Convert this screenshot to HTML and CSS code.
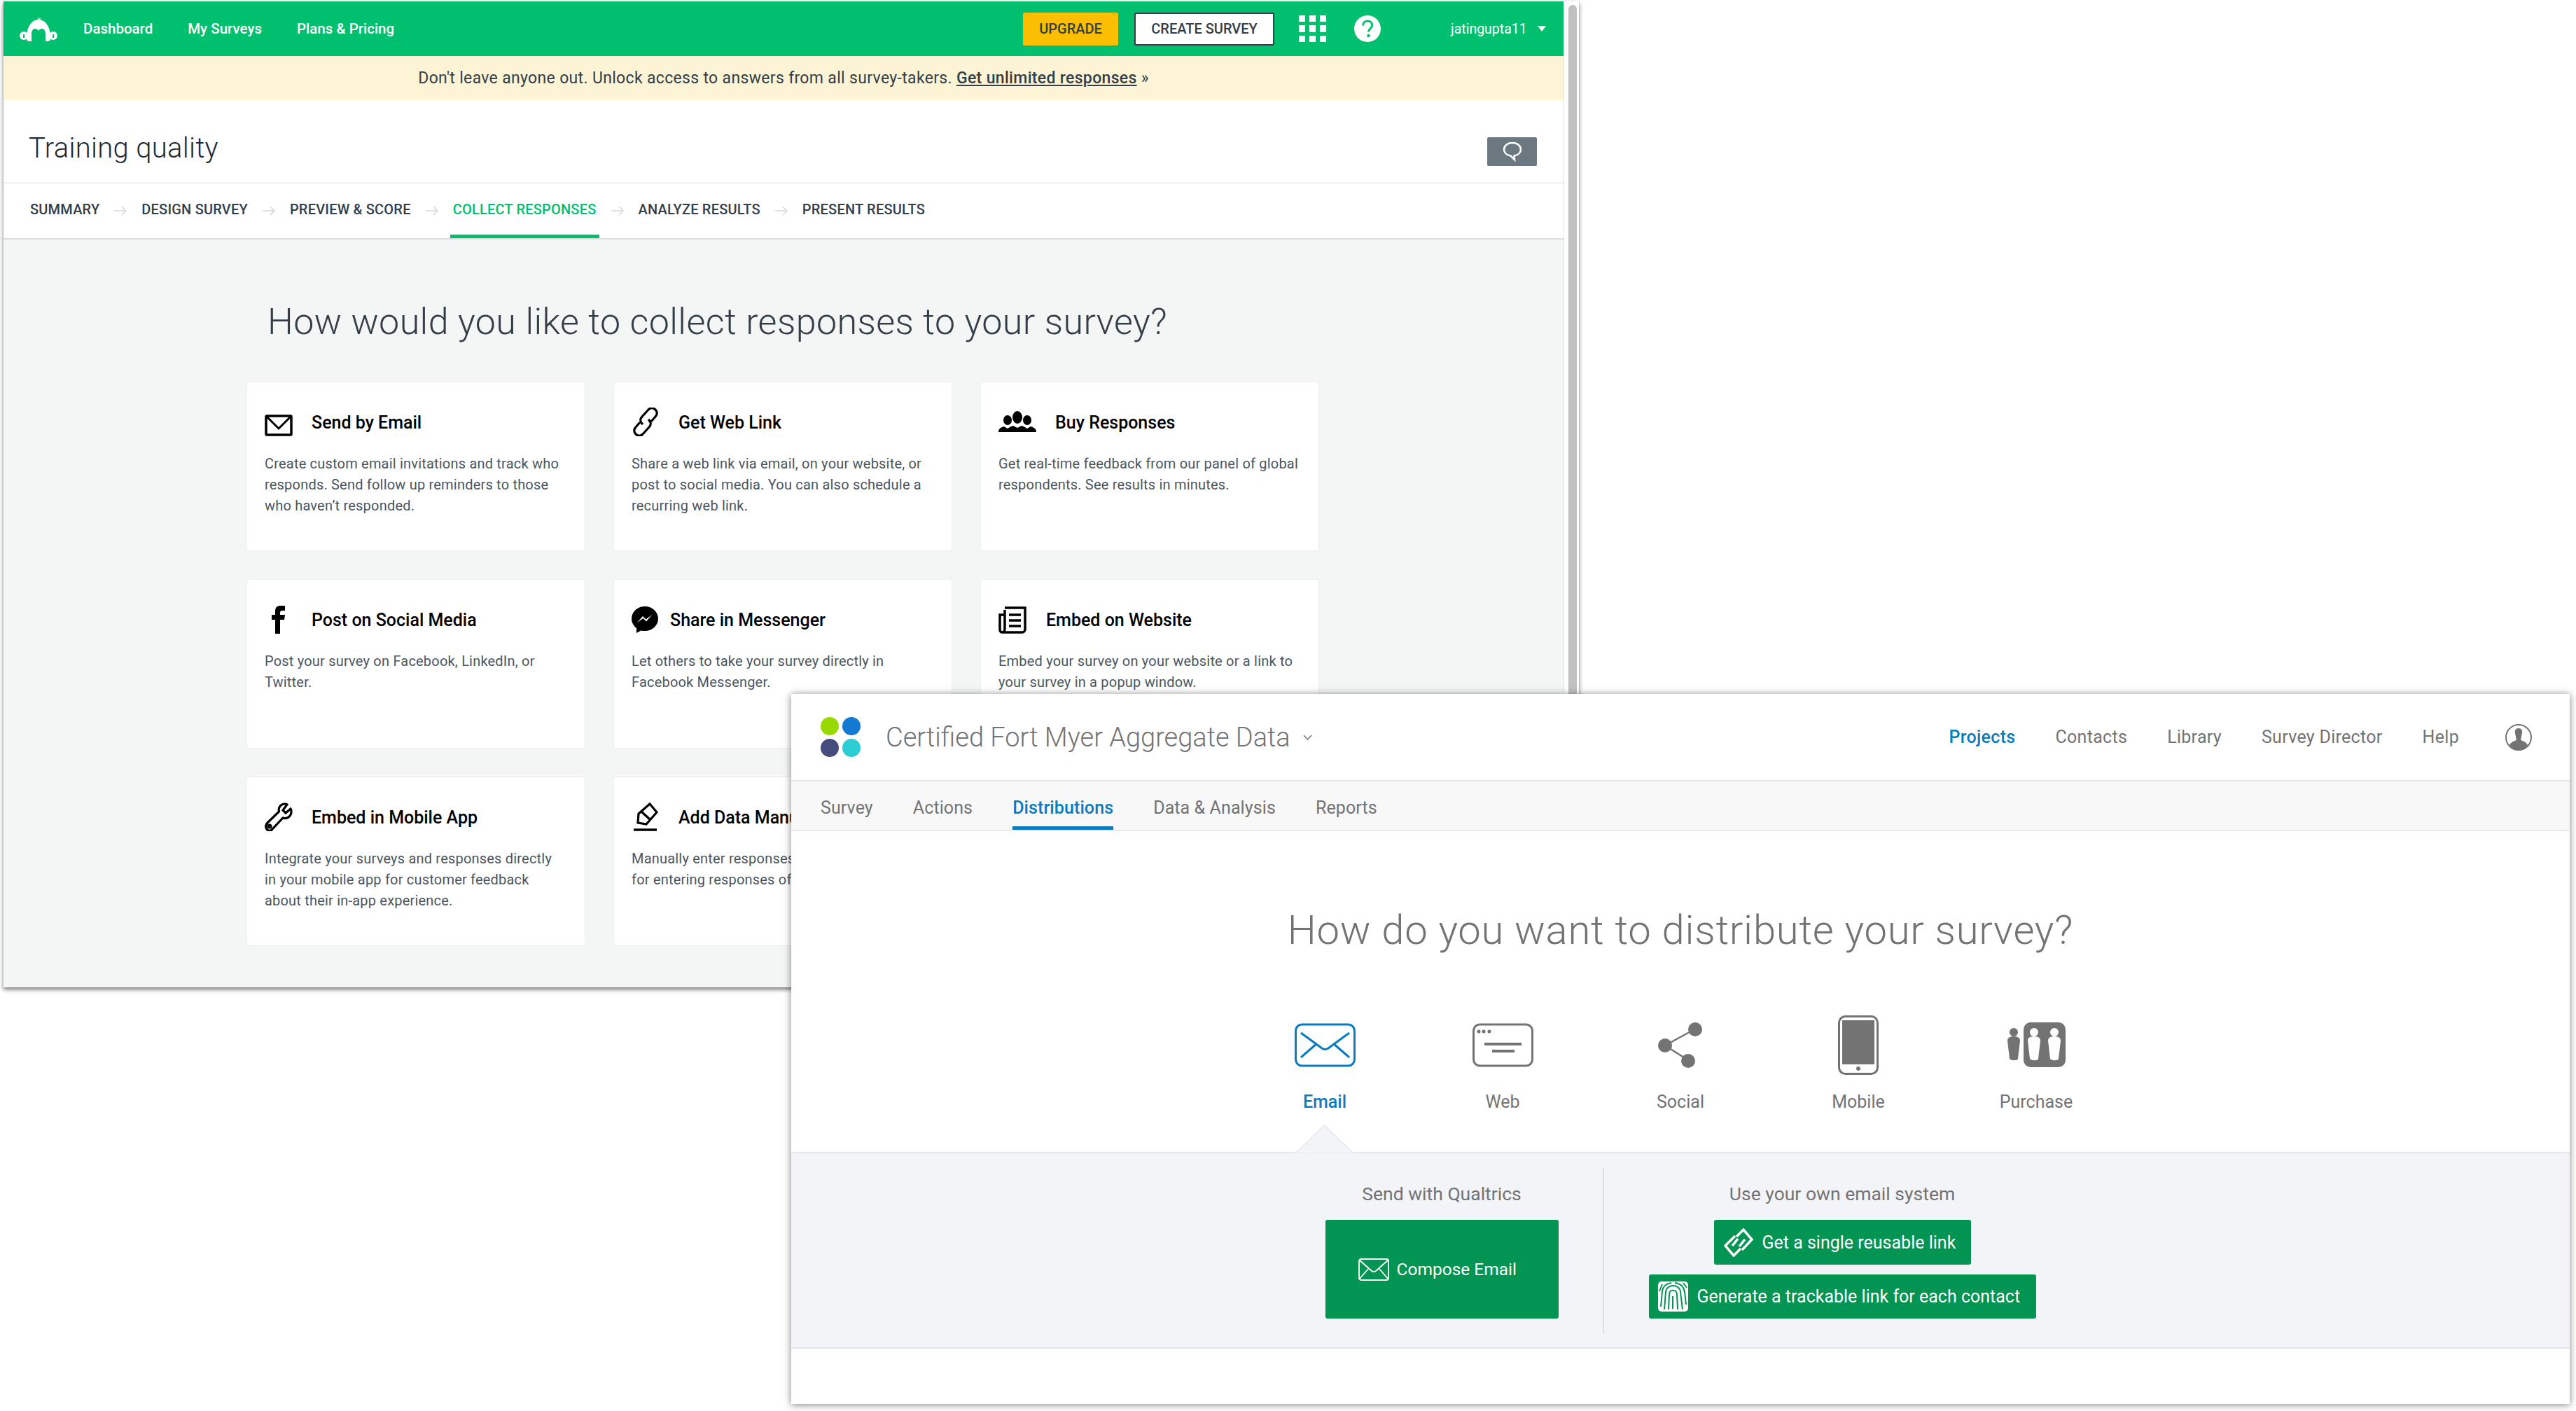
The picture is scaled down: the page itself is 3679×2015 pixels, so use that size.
FILE: index.html
```html
<!DOCTYPE html>
<html lang="en">
<head>
    <meta charset="UTF-8">
    <title>Survey distribution comparison</title>
    <link rel="stylesheet" href="styles.css">
</head>
<body>

    <!-- SurveyMonkey window -->
    <div class="window window-sm">
        <div class="sm-main">
            <div class="sm-nav">
                <svg class="sm-logo" width="54" height="36" viewBox="0 0 54 36">
                    <path d="M27 0l-1 5 4-4-1 5z" fill="#fff"/>
                    <path d="M10 33C9 15 17 4 27 4s18 11 17 29l-3 2H13z" fill="#fff"/>
                    <path d="M17 36V25c0-5 2-8 5-8 2 0 4 1 5 3 1-2 3-3 5-3 3 0 5 3 5 8v11z" fill="#00bf6f"/>
                    <circle cx="6" cy="27" r="6" fill="#fff"/>
                    <circle cx="48" cy="27" r="6" fill="#fff"/>
                    <rect x="5" y="25" width="2" height="5" fill="#00bf6f"/>
                    <rect x="47" y="25" width="2" height="5" fill="#00bf6f"/>
                </svg>
                <a class="sm-link">Dashboard</a>
                <a class="sm-link">My Surveys</a>
                <a class="sm-link">Plans &amp; Pricing</a>
                <div class="sm-nav-right">
                    <button class="sm-btn sm-btn-upgrade">UPGRADE</button>
                    <button class="sm-btn sm-btn-create">CREATE SURVEY</button>
                    <svg class="sm-apps" width="39" height="38" viewBox="0 0 39 38" fill="#fff">
                        <rect x="0" y="0" width="9" height="9"/><rect x="15" y="0" width="9" height="9"/><rect x="30" y="0" width="9" height="9"/>
                        <rect x="0" y="14" width="9" height="10"/><rect x="15" y="14" width="9" height="10"/><rect x="30" y="14" width="9" height="10"/>
                        <rect x="0" y="29" width="9" height="9"/><rect x="15" y="29" width="9" height="9"/><rect x="30" y="29" width="9" height="9"/>
                    </svg>
                    <svg class="sm-help" width="38" height="38" viewBox="0 0 38 38">
                        <circle cx="19" cy="19" r="19" fill="#fff"/>
                        <path d="M12.5 14.5c0-4 3-6.500 6.700-6.500 3.800 0 6.500 2.400 6.500 5.800 0 5-5.200 5-5.200 9.700" fill="none" stroke="#00bf6f" stroke-width="3"/>
                        <circle cx="20.500" cy="29" r="2.300" fill="#00bf6f"/>
                    </svg>
                    <span class="sm-user">jatingupta11</span>
                    <span class="sm-caret"></span>
                </div>
            </div>

            <div class="sm-banner">Don't leave anyone out. Unlock access to answers from all survey-takers. <a>Get unlimited responses</a> »</div>

            <div class="sm-title-row">
                <h1 class="sm-title">Training quality</h1>
                <div class="sm-chat">
                    <svg width="30" height="30" viewBox="0 0 30 30">
                        <path d="M15 3C8 3 3 7 3 12.500 3 17 7 20.500 12.500 21.500L18 27l-.5-5.500C23 20.500 27 17 27 12.500 27 7 22 3 15 3z" fill="none" stroke="#fff" stroke-width="2.600"/>
                    </svg>
                </div>
            </div>

            <div class="sm-steps">
                <span class="sm-step">SUMMARY</span>
                <svg class="sm-arrow" width="18" height="14" viewBox="0 0 18 14"><path d="M0 7h16M11 1l6 6-6 6" fill="none" stroke="#d5d9d9" stroke-width="1.500"/></svg>
                <span class="sm-step">DESIGN SURVEY</span>
                <svg class="sm-arrow" width="18" height="14" viewBox="0 0 18 14"><path d="M0 7h16M11 1l6 6-6 6" fill="none" stroke="#d5d9d9" stroke-width="1.500"/></svg>
                <span class="sm-step">PREVIEW &amp; SCORE</span>
                <svg class="sm-arrow" width="18" height="14" viewBox="0 0 18 14"><path d="M0 7h16M11 1l6 6-6 6" fill="none" stroke="#d5d9d9" stroke-width="1.500"/></svg>
                <span class="sm-step sm-step-active">COLLECT RESPONSES</span>
                <svg class="sm-arrow" width="18" height="14" viewBox="0 0 18 14"><path d="M0 7h16M11 1l6 6-6 6" fill="none" stroke="#d5d9d9" stroke-width="1.500"/></svg>
                <span class="sm-step">ANALYZE RESULTS</span>
                <svg class="sm-arrow" width="18" height="14" viewBox="0 0 18 14"><path d="M0 7h16M11 1l6 6-6 6" fill="none" stroke="#d5d9d9" stroke-width="1.500"/></svg>
                <span class="sm-step">PRESENT RESULTS</span>
            </div>

            <div class="sm-content">
                <h2 class="sm-heading">How would you like to collect responses to your survey?</h2>
                <div class="card-grid">

                    <div class="card">
                        <div class="card-head">
                            <svg width="40" height="41" viewBox="0 0 40 41"><rect x="2" y="12" width="36" height="27" rx="1" fill="none" stroke="#000" stroke-width="3.500"/><path d="M3 13l17 17 17-17" fill="none" stroke="#000" stroke-width="3"/></svg>
                            <h3>Send by Email</h3>
                        </div>
                        <p>Create custom email invitations and track who responds. Send follow up reminders to those who haven’t responded.</p>
                    </div>

                    <div class="card">
                        <div class="card-head">
                            <svg width="40" height="41" viewBox="0 0 40 41" fill="none" stroke="#000" stroke-width="3.200">
                                <path d="M16 24l-1-1c-3-3-3-7 0-10l9-10c3-3 7-3 10 0s3 7 0 10l-6 7"/>
                                <path d="M24 17l1 1c3 3 3 7 0 10l-9 10c-3 3-7 3-10 0s-3-7 0-10l6-7"/>
                            </svg>
                            <h3>Get Web Link</h3>
                        </div>
                        <p>Share a web link via email, on your website, or post to social media. You can also schedule a recurring web link.</p>
                    </div>

                    <div class="card">
                        <div class="card-head">
                            <svg width="54" height="41" viewBox="0 0 54 41">
                                <ellipse cx="13" cy="18" rx="6" ry="7"/><ellipse cx="41" cy="18" rx="6" ry="7"/><ellipse cx="27" cy="14" rx="7" ry="9"/>
                                <path d="M0 35c0-5 4-7 8-8l5 3 5-3 3-1 6 3 6-3 3 1 5 3 5-3c4 1 8 3 8 8z"/>
                            </svg>
                            <h3>Buy Responses</h3>
                        </div>
                        <p>Get real-time feedback from our panel of global respondents. See results in minutes.</p>
                    </div>

                    <div class="card">
                        <div class="card-head">
                            <svg width="40" height="41" viewBox="0 0 40 41"><path d="M15 41V21h-5v-7h5V9c0-6 3-8 8-8h6v7h-4c-2 0-3 1-3 3v3h7l-1 7h-6v20z"/></svg>
                            <h3>Post on Social Media</h3>
                        </div>
                        <p>Post your survey on Facebook, LinkedIn, or Twitter.</p>
                    </div>

                    <div class="card">
                        <div class="card-head card-head-tight">
                            <svg width="38" height="41" viewBox="0 0 38 41">
                                <path d="M19 2C8.500 2 0 9.800 0 19.500c0 5.500 2.700 10.300 7 13.500V40l6.500-3.600c1.700.5 3.600.7 5.500.7 10.500 0 19-7.800 19-17.600S29.500 2 19 2z"/>
                                <path d="M8 25l8-9 4.500 4.500L29 14l-8 9.500-4.500-4.500z" fill="#fff"/>
                            </svg>
                            <h3>Share in Messenger</h3>
                        </div>
                        <p>Let others to take your survey directly in Facebook Messenger.</p>
                    </div>

                    <div class="card">
                        <div class="card-head">
                            <svg width="41" height="41" viewBox="0 0 41 41" fill="none" stroke="#000" stroke-width="3.500">
                                <path d="M9 7V34c0 3-2 5-4 5s-3-2-3-4V14h7M9 4h29v31c0 2-2 4-4 4H5"/>
                                <path d="M15 14h17M15 22h17M15 30h17"/>
                            </svg>
                            <h3>Embed on Website</h3>
                        </div>
                        <p>Embed your survey on your website or a link to your survey in a popup window.</p>
                    </div>

                    <div class="card">
                        <div class="card-head">
                            <svg width="40" height="41" viewBox="0 0 40 41" fill="none" stroke="#000" stroke-width="3.200">
                                <path d="M29 2c-6 0-10 5-8.500 11L4 29c-3 3-3 6-1 9s6 3 8 0l15-16c6 2 12-2 12-9 0-1 0-3-1-4l-7 6-4-4 6-8c-1-1-2-1-3-1z"/>
                                <circle cx="7" cy="34" r="2"/>
                            </svg>
                            <h3>Embed in Mobile App</h3>
                        </div>
                        <p>Integrate your surveys and responses directly<br>in your mobile app for customer feedback about their in-app experience.</p>
                    </div>

                    <div class="card">
                        <div class="card-head">
                            <svg width="40" height="41" viewBox="0 0 40 41" fill="none" stroke="#000" stroke-width="3.200">
                                <path d="M26 2l10 12-15 17-12-2 1-13z" />
                                <path d="M14 13l12 11" />
                                <path d="M3 39h33" stroke-width="3.500"/>
                            </svg>
                            <h3>Add Data Manually</h3>
                        </div>
                        <p>Manually enter responses you have collected,<br>for entering responses offline.</p>
                    </div>

                </div>
            </div>
        </div>
        <div class="sm-scrollbar"><div class="sm-thumb"></div></div>
    </div>

    <!-- Qualtrics window -->
    <div class="window window-q">
        <div class="q-header">
            <div class="q-dots"><i class="dot dot-green"></i><i class="dot dot-blue"></i><i class="dot dot-navy"></i><i class="dot dot-cyan"></i></div>
            <span class="q-project">Certified Fort Myer Aggregate Data</span>
            <svg class="q-chevron" width="13" height="8" viewBox="0 0 13 8"><path d="M1 1l5.500 6L12 1" fill="none" stroke="#737373" stroke-width="1.500"/></svg>
            <div class="q-header-right">
                <a class="q-link q-link-active">Projects</a>
                <a class="q-link">Contacts</a>
                <a class="q-link">Library</a>
                <a class="q-link">Survey Director</a>
                <a class="q-link">Help</a>
                <svg class="q-avatar" width="38" height="38" viewBox="0 0 38 38">
                    <circle cx="19" cy="19" r="18" fill="#fff" stroke="#737373" stroke-width="2"/>
                    <path d="M19 6c-4 0-6 3-5 7l2 10c-4 1-8 3-10 7 3 4 8 7 13 7s10-3 13-7c-2-4-6-6-10-7l2-10c1-4-1-7-5-7z" fill="#737373"/>
                </svg>
            </div>
        </div>

        <div class="q-tabs">
            <a class="q-tab">Survey</a>
            <a class="q-tab">Actions</a>
            <a class="q-tab q-tab-active">Distributions</a>
            <a class="q-tab">Data &amp; Analysis</a>
            <a class="q-tab">Reports</a>
        </div>

        <h2 class="q-heading">How do you want to distribute your survey?</h2>

        <div class="q-options">
            <div class="q-option q-option-active">
                <div class="q-option-icon">
                    <svg width="87" height="63" viewBox="0 0 87 63" fill="none" stroke="#0a7bbf" stroke-width="3">
                        <rect x="1.500" y="2" width="84" height="59" rx="9"/>
                        <path d="M9 14l30 22c3 2 6 2 9 0l30-22M32 29L9 49M55 29l23 20"/>
                    </svg>
                </div>
                <span>Email</span>
            </div>
            <div class="q-option">
                <div class="q-option-icon">
                    <svg width="87" height="63" viewBox="0 0 87 63">
                        <rect x="1.500" y="2" width="84" height="59" rx="9" fill="none" stroke="#737373" stroke-width="3"/>
                        <circle cx="9" cy="12" r="2.500" fill="#737373"/><circle cx="16" cy="12" r="2.500" fill="#737373"/><circle cx="24" cy="12" r="2.500" fill="#737373"/>
                        <rect x="17" y="28" width="53" height="4" fill="#737373"/><rect x="28" y="38" width="32" height="4" fill="#737373"/>
                    </svg>
                </div>
                <span>Web</span>
            </div>
            <div class="q-option">
                <div class="q-option-icon">
                    <svg width="64" height="65" viewBox="0 0 64 65" fill="#737373">
                        <path d="M52 10L10 33l33 21" fill="none" stroke="#737373" stroke-width="2.500"/>
                        <circle cx="53" cy="10" r="10"/><circle cx="10" cy="33" r="10"/><circle cx="43" cy="55" r="10"/>
                    </svg>
                </div>
                <span>Social</span>
            </div>
            <div class="q-option">
                <div class="q-option-icon">
                    <svg width="58" height="85" viewBox="0 0 58 85">
                        <rect x="1.500" y="1.500" width="55" height="82" rx="9" fill="none" stroke="#737373" stroke-width="3"/>
                        <rect x="6" y="7" width="46" height="63" fill="#737373"/>
                        <circle cx="29" cy="76" r="3" fill="#737373"/>
                    </svg>
                </div>
                <span>Mobile</span>
            </div>
            <div class="q-option">
                <div class="q-option-icon">
                    <svg width="84" height="64" viewBox="0 0 84 64" fill="#737373">
                        <rect x="24" y="0" width="60" height="64" rx="10"/>
                        <circle cx="10" cy="14" r="6"/><path d="M1 26c0-4 4-6 9-6s9 2 9 6l-3 26c0 3-10 3-12 0z"/>
                        <g fill="#fff">
                            <circle cx="39" cy="14" r="6"/><path d="M30 26c0-4 4-6 9-6s9 2 9 6l-3 26c0 3-10 3-12 0z"/>
                            <circle cx="68" cy="14" r="6"/><path d="M59 26c0-4 4-6 9-6s9 2 9 6l-3 26c0 3-10 3-12 0z"/>
                        </g>
                    </svg>
                </div>
                <span>Purchase</span>
            </div>
        </div>

        <div class="q-panel">
            <!-- little notch pointing at the selected option -->
            <svg class="q-notch" width="81" height="41" viewBox="0 0 81 41">
                <path d="M0 40.500L40.500 .5 81 40.500z" fill="#f2f4f8"/>
                <path d="M0 40L40.500 1 81 40" fill="none" stroke="#e3e7ec" stroke-width="1.500"/>
            </svg>
            <div class="q-col">
                <div class="q-col-title">Send with Qualtrics</div>
                <button class="q-btn q-btn-big">
                    <svg width="44" height="32" viewBox="0 0 44 32" fill="none" stroke="#fff" stroke-width="1.800">
                        <rect x="1" y="1" width="42" height="30" rx="3"/>
                        <path d="M1 2l18 16c2 1.500 4 1.500 6 0L43 2M15 14L1 30M29 14l14 16"/>
                    </svg>
                    Compose Email
                </button>
            </div>
            <div class="q-divider"></div>
            <div class="q-col">
                <div class="q-col-title">Use your own email system</div>
                <button class="q-btn q-btn-link">
                    <svg width="42" height="41" viewBox="0 0 42 41" fill="none" stroke="#fff" stroke-width="3.500">
                        <path d="M18 12L28 2l12 14-14 15M24 29L14 39 2 25l14-14"/>
                        <path d="M30 16l-8 10M12 25l8-10"/>
                    </svg>
                    Get a single reusable link
                </button>
                <button class="q-btn q-btn-track">
                    <svg width="43" height="43" viewBox="0 0 43 43">
                        <rect width="43" height="43" rx="5" fill="#fff"/>
                        <g fill="none" stroke="#029452" stroke-width="2">
                            <path d="M21 39V21M15 40L16 18c0-7 10-7 11 0l1 22M9 40L11 15C12 3 31 3 32 15l3 25"/>
                            <path d="M4 36L6 14C7 6 12 3 19 2M24 2c8 1 13 6 14 13l2 18M2 14L6 4M36 2l5 7"/>
                        </g>
                    </svg>
                    Generate a trackable link for each contact
                </button>
            </div>
        </div>
    </div>

</body>
</html>
```

FILE: styles.css
```css
* {
    box-sizing: border-box;
}

body {
    margin: 0;
    width: 3679px;
    height: 2015px;
    overflow: hidden;
    position: relative;
    background-color: #fff;
    font-family: Roboto, "Liberation Sans", sans-serif;
}

h1, h2, h3, p {
    margin: 0;
}

button {
    font-family: inherit;
}

svg {
    display: block;
    flex-shrink: 0;
}

.window {
    position: absolute;
    background-color: #fff;
    overflow: hidden;
}

/* SurveyMonkey window */
.window-sm {
    left: 5px;
    top: 2px;
    width: 2250px;
    height: 1408px;
    display: flex;
    box-shadow: 0 3px 6px rgba(0, 0, 0, 0.55);
}

.sm-main {
    width: 2228px;
    display: flex;
    flex-direction: column;
}

.sm-scrollbar {
    width: 22px;
    padding: 5px 3px 0 6px;
    border-left: 1px solid #e3e5e5;
}

.sm-thumb {
    height: 100%;
    background-color: #c1c1c1;
    border-radius: 6px 6px 0 0;
}

.sm-nav {
    height: 78px;
    flex-shrink: 0;
    padding: 0 25px 0 23px;
    display: flex;
    align-items: center;
    background-color: #00bf6f;
}

.sm-logo {
    margin-right: 37px;
    margin-top: 2px;
}

.sm-link {
    margin-right: 50px;
    color: #fff;
    font-size: 20.5px;
    font-weight: 500;
}

.sm-nav-right {
    margin-left: auto;
    display: flex;
    align-items: center;
}

.sm-btn {
    height: 47px;
    border-radius: 2px;
    font-size: 20px;
    font-weight: 500;
    color: #333e48;
}

.sm-btn-upgrade {
    width: 136px;
    margin-right: 23px;
    border: none;
    background-color: #fbbe00;
}

.sm-btn-create {
    width: 200px;
    margin-right: 35px;
    border: 2px solid #333e48;
    background-color: #fff;
}

.sm-apps {
    margin-right: 40px;
}

.sm-help {
    margin-right: 100px;
}

.sm-user {
    width: 111px;
    margin-right: 13px;
    color: #fff;
    font-size: 19.5px;
    white-space: nowrap;
}

.sm-caret {
    border-left: 6px solid transparent;
    border-right: 6px solid transparent;
    border-top: 8px solid #fff;
}

.sm-banner {
    height: 63px;
    flex-shrink: 0;
    display: flex;
    align-items: center;
    justify-content: center;
    white-space: pre-wrap;
    background-color: #fdf4d6;
    color: #333e48;
    font-size: 23px;
    letter-spacing: 0.33px;
}

.sm-banner a {
    font-weight: 500;
    text-decoration: underline;
}

.sm-title-row {
    height: 119px;
    flex-shrink: 0;
    padding: 20px 38px 0 36px;
    display: flex;
    align-items: center;
    justify-content: space-between;
    border-bottom: 2px solid #edeeee;
}

.sm-title {
    font-size: 40px;
    font-weight: 300;
    letter-spacing: 0.3px;
    color: #1f2a33;
}

.sm-chat {
    width: 71px;
    height: 41px;
    margin-top: 9px;
    display: flex;
    align-items: center;
    justify-content: center;
    border-radius: 2px;
    background-color: #6b787f;
}

.sm-steps {
    height: 80px;
    flex-shrink: 0;
    padding-left: 34px;
    display: flex;
    align-items: stretch;
    border-bottom: 2px solid #d9dcdc;
}

.sm-step {
    padding: 0 4px;
    display: flex;
    align-items: center;
    color: #333e48;
    font-size: 20px;
    font-weight: 500;
    letter-spacing: 0.2px;
    border-bottom: 5px solid transparent;
}

.sm-step-active {
    color: #00bf6f;
    border-bottom-color: #00bf6f;
}

.sm-arrow {
    margin: 0 17px;
    align-self: center;
}

.sm-content {
    flex: 1;
    padding: 87px 349px 0 348px;
    overflow: hidden;
    background-color: #f4f5f5;
}

.sm-heading {
    margin-left: 29px;
    margin-bottom: 56px;
    font-size: 52px;
    font-weight: 300;
    letter-spacing: 0.4px;
    color: #333e48;
    white-space: nowrap;
}

.card-grid {
    display: grid;
    grid-template-columns: repeat(3, 482px);
    grid-auto-rows: 240px;
    gap: 42px;
}

.card {
    padding: 36px 24px 0 25px;
    border-radius: 2px;
    background-color: #fff;
    box-shadow: 0 0 2px rgba(0, 0, 0, 0.1);
}

.card-head {
    height: 50px;
    display: flex;
    gap: 27px;
    margin-bottom: 15px;
}

.card-head-tight {
    gap: 17px;
}

.card-head h3 {
    padding-top: 2px;
    font-size: 25px;
    font-weight: 500;
    line-height: 40px;
    color: #000;
    white-space: nowrap;
}

.card p {
    font-size: 20px;
    line-height: 30px;
    letter-spacing: 0.2px;
    color: #4b565e;
}

/* Qualtrics window */
.window-q {
    left: 1130px;
    top: 991px;
    width: 2540px;
    height: 1014px;
    box-shadow: 0 1px 10px rgba(0, 0, 0, 0.5);
}

.q-header {
    height: 125px;
    padding: 0 54px 0 42px;
    display: flex;
    align-items: center;
    border-bottom: 2px solid #e8e8e8;
}

.q-dots {
    width: 57px;
    display: grid;
    grid-template-columns: 26px 26px;
    gap: 5px;
    margin-right: 36px;
}

.dot {
    height: 26px;
    border-radius: 50%;
}

.dot-green { background-color: #98d900; }
.dot-blue { background-color: #1379d1; }
.dot-navy { background-color: #464c7e; }
.dot-cyan { background-color: #2dcdd4; }

.q-project {
    font-size: 38px;
    font-weight: 300;
    color: #737373;
}

.q-chevron {
    margin-left: 18px;
}

.q-header-right {
    margin-left: auto;
    display: flex;
    align-items: center;
    gap: 57px;
}

.q-link {
    font-size: 25px;
    letter-spacing: 0.3px;
    color: #737373;
}

.q-link-active {
    color: #0a7bbf;
    font-weight: 500;
}

.q-avatar {
    margin-left: 9px;
}

.q-tabs {
    height: 71px;
    padding-left: 42px;
    display: flex;
    gap: 57px;
    background-color: #f8f8f8;
    border-bottom: 2px solid #e8e8e8;
}

.q-tab {
    padding-top: 11px;
    display: flex;
    align-items: center;
    font-size: 25px;
    letter-spacing: 0.1px;
    color: #737373;
    border-bottom: 5px solid transparent;
}

.q-tab-active {
    color: #0a7bbf;
    font-weight: 500;
    border-bottom-color: #0a7bbf;
}

.q-heading {
    margin-top: 108px;
    text-align: center;
    font-size: 58px;
    font-weight: 300;
    letter-spacing: 0.76px;
    line-height: 66px;
    color: #737373;
}

.q-options {
    margin-top: 78px;
    display: flex;
    justify-content: center;
}

.q-option {
    width: 254px;
    display: flex;
    flex-direction: column;
    align-items: center;
    color: #737373;
    font-size: 25px;
}

.q-option span {
    margin-top: 14px;
}

.q-option-icon {
    height: 106px;
    display: flex;
    align-items: center;
}

.q-option-active {
    color: #0a7bbf;
    font-weight: 500;
}

.q-panel {
    position: relative;
    height: 281px;
    margin-top: 57px;
    padding: 22px 0 19px;
    display: flex;
    justify-content: center;
    background-color: #f2f4f8;
    border-top: 2px solid #e3e7ec;
    border-bottom: 2px solid #e3e7ec;
}

.q-notch {
    position: absolute;
    left: 721px;
    top: -41px;
}

.q-col {
    display: flex;
    flex-direction: column;
    align-items: center;
}

.q-col-title {
    height: 73px;
    padding-top: 20px;
    font-size: 26.5px;
    line-height: 32px;
    color: #737373;
}

.q-divider {
    width: 1px;
    margin: 0 64px;
    background-color: #c9cbd0;
}

.q-btn {
    padding: 0;
    display: flex;
    align-items: center;
    border: none;
    border-radius: 3px;
    background-color: #029452;
    color: #fff;
    font-size: 25px;
    white-space: nowrap;
}

.q-btn-big {
    width: 333px;
    height: 141px;
    padding-left: 47px;
    gap: 11px;
    font-size: 24.5px;
}

.q-btn-link {
    width: 367px;
    height: 64px;
    padding-left: 14px;
    gap: 13px;
    margin-bottom: 14px;
}

.q-btn-track {
    width: 553px;
    height: 63px;
    padding-left: 13px;
    gap: 13px;
}
```
